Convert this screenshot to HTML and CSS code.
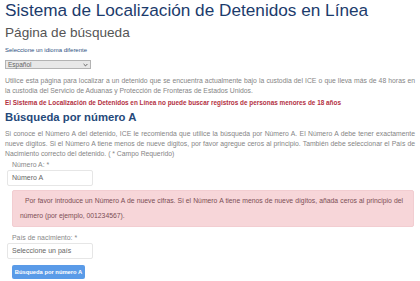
FILE: index.html
```html
<!DOCTYPE html>
<html lang="es">
<head>
<meta charset="utf-8">
<link rel="stylesheet" href="styles.css">
</head>
<body>
<div class="page">
  <h1 class="title">Sistema de Localización de Detenidos en Línea</h1>
  <h2 class="subtitle">Página de búsqueda</h2>
  <div class="lang-label">Seleccione un idioma diferente</div>
  <div class="lang-select"><span>Español</span><svg class="chev" width="5" height="4" viewBox="0 0 5 4"><path d="M0.6 1 L2.5 2.9 L4.4 1" fill="none" stroke="#555" stroke-width="0.9"/></svg></div>
  <p class="intro">Utilice esta página para localizar a un detenido que se encuentra actualmente bajo la custodia del ICE o que lleva más de 48 horas en la custodia del Servicio de Aduanas y Protección de Fronteras de Estados Unidos.</p>
  <p class="warn">El Sistema de Localización de Detenidos en Línea no puede buscar registros de personas menores de 18 años</p>
  <h3 class="section">Búsqueda por número A</h3>
  <p class="intro intro2">Si conoce el Número A del detenido, ICE le recomienda que utilice la búsqueda por Número A. El Número A debe tener exactamente nueve dígitos. Si el Número A tiene menos de nueve dígitos, por favor agregue ceros al principio. También debe seleccionar el País de Nacimiento correcto del detenido. ( * Campo Requerido)</p>
  <div class="field">
    <label class="label">Número A: *</label>
    <div class="input">Número A</div>
  </div>
  <div class="alert">Por favor introduce un Número A de nueve cifras. Si el Número A tiene menos de nueve dígitos, añada ceros al principio del número (por ejemplo, 001234567).</div>
  <div class="field field2">
    <label class="label">País de nacimiento: *</label>
    <div class="input">Seleccione un país</div>
  </div>
  <div class="btn">Búsqueda por número A</div>
</div>
</body>
</html>
```
FILE: styles.css
```css
html, body { margin: 0; padding: 0; background: #fff; }
body { font-family: "Liberation Sans", Arial, sans-serif; }
.page { padding: 0 5px; display: flex; flex-direction: column; align-items: flex-start; }
.title { margin: 0; font-weight: normal; font-size: 17.2px; line-height: 20px; color: #1c3b6c; white-space: nowrap; }
.subtitle { margin: 3px 0 0; font-weight: normal; font-size: 13.6px; line-height: 20px; color: #555; }
.lang-label { margin-top: 3px; font-size: 6px; line-height: 8px; color: #2b4f80; }
.lang-select { box-sizing: border-box; margin-top: 6px; width: 86px; height: 9px; padding: 0 2px; border: 1px solid #b3b3b3; background: #e8e8e8; font-size: 6.5px; line-height: 7px; color: #666; display: flex; justify-content: space-between; align-items: center; }
.intro { margin: 7px 0 0; font-size: 6.8px; line-height: 10px; color: #858585; width: 410px; text-align: justify; }
.intro2 { margin-top: 5px; }
.warn { margin: 2px 0 0; font-size: 6.4px; line-height: 10px; color: #b3303f; font-weight: bold; }
.section { margin: 2px 0 0; font-size: 11.3px; line-height: 14px; color: #25497a; font-weight: bold; }
.field { display: flex; flex-direction: column; align-items: flex-start; margin-left: 2px; }
.label { margin: 1px 0 0 5px; font-size: 6.9px; line-height: 9px; color: #888; }
.input { box-sizing: border-box; margin-top: 1px; width: 86px; height: 16px; padding-left: 4px; border: 1px solid #e6e6e6; border-radius: 2px; font-size: 7px; line-height: 14px; color: #666; }
.alert { box-sizing: border-box; margin: 4px 0 0 7px; width: 402px; padding: 3px 10px 3px 7px; background: #f7d6d9; border: 1px solid #f2cdd1; border-radius: 2px; font-size: 6.8px; line-height: 14.5px; color: #7b4e55; text-indent: 5px; text-align: justify; }
.field2 .label { margin-top: 5.5px; }
.btn { margin: 6px 0 0 7px; width: 73px; height: 14px; background: #5a9be8; color: #fff; font-size: 5.8px; font-weight: bold; line-height: 14px; text-align: center; border-radius: 2px; }
```
